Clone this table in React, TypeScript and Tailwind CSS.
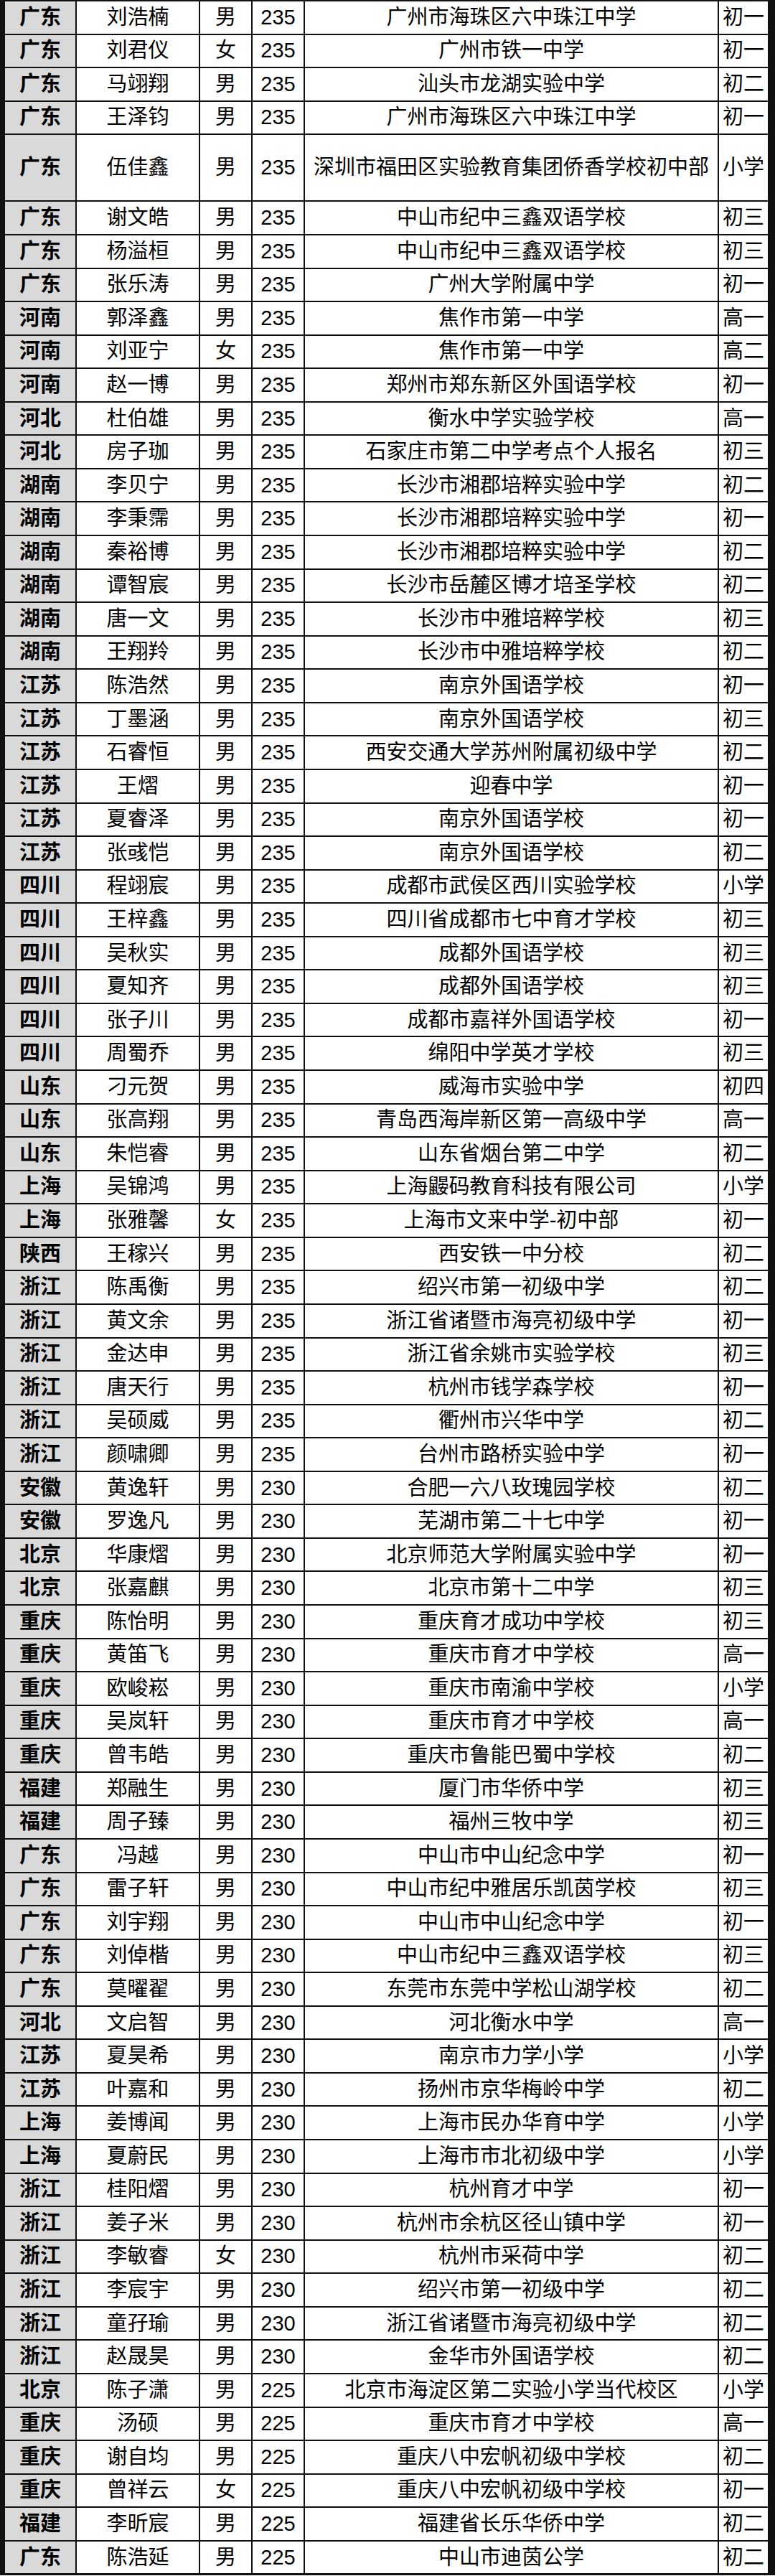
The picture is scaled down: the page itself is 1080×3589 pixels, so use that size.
const rows: [string, string, string, string, string, string][] = [
  ["广东", "刘浩楠", "男", "235", "广州市海珠区六中珠江中学", "初一"],
  ["广东", "刘君仪", "女", "235", "广州市铁一中学", "初一"],
  ["广东", "马翊翔", "男", "235", "汕头市龙湖实验中学", "初二"],
  ["广东", "王泽钧", "男", "235", "广州市海珠区六中珠江中学", "初一"],
  ["广东", "伍佳鑫", "男", "235", "深圳市福田区实验教育集团侨香学校初中部", "小学"],
  ["广东", "谢文皓", "男", "235", "中山市纪中三鑫双语学校", "初三"],
  ["广东", "杨溢桓", "男", "235", "中山市纪中三鑫双语学校", "初三"],
  ["广东", "张乐涛", "男", "235", "广州大学附属中学", "初一"],
  ["河南", "郭泽鑫", "男", "235", "焦作市第一中学", "高一"],
  ["河南", "刘亚宁", "女", "235", "焦作市第一中学", "高二"],
  ["河南", "赵一博", "男", "235", "郑州市郑东新区外国语学校", "初一"],
  ["河北", "杜伯雄", "男", "235", "衡水中学实验学校", "高一"],
  ["河北", "房子珈", "男", "235", "石家庄市第二中学考点个人报名", "初三"],
  ["湖南", "李贝宁", "男", "235", "长沙市湘郡培粹实验中学", "初二"],
  ["湖南", "李秉霈", "男", "235", "长沙市湘郡培粹实验中学", "初一"],
  ["湖南", "秦裕博", "男", "235", "长沙市湘郡培粹实验中学", "初二"],
  ["湖南", "谭智宸", "男", "235", "长沙市岳麓区博才培圣学校", "初二"],
  ["湖南", "唐一文", "男", "235", "长沙市中雅培粹学校", "初三"],
  ["湖南", "王翔羚", "男", "235", "长沙市中雅培粹学校", "初二"],
  ["江苏", "陈浩然", "男", "235", "南京外国语学校", "初一"],
  ["江苏", "丁墨涵", "男", "235", "南京外国语学校", "初三"],
  ["江苏", "石睿恒", "男", "235", "西安交通大学苏州附属初级中学", "初二"],
  ["江苏", "王熠", "男", "235", "迎春中学", "初一"],
  ["江苏", "夏睿泽", "男", "235", "南京外国语学校", "初一"],
  ["江苏", "张彧恺", "男", "235", "南京外国语学校", "初二"],
  ["四川", "程翊宸", "男", "235", "成都市武侯区西川实验学校", "小学"],
  ["四川", "王梓鑫", "男", "235", "四川省成都市七中育才学校", "初三"],
  ["四川", "吴秋实", "男", "235", "成都外国语学校", "初三"],
  ["四川", "夏知齐", "男", "235", "成都外国语学校", "初三"],
  ["四川", "张子川", "男", "235", "成都市嘉祥外国语学校", "初一"],
  ["四川", "周蜀乔", "男", "235", "绵阳中学英才学校", "初三"],
  ["山东", "刁元贺", "男", "235", "威海市实验中学", "初四"],
  ["山东", "张高翔", "男", "235", "青岛西海岸新区第一高级中学", "高一"],
  ["山东", "朱恺睿", "男", "235", "山东省烟台第二中学", "初二"],
  ["上海", "吴锦鸿", "男", "235", "上海鼹码教育科技有限公司", "小学"],
  ["上海", "张雅馨", "女", "235", "上海市文来中学-初中部", "初一"],
  ["陕西", "王稼兴", "男", "235", "西安铁一中分校", "初二"],
  ["浙江", "陈禹衡", "男", "235", "绍兴市第一初级中学", "初二"],
  ["浙江", "黄文余", "男", "235", "浙江省诸暨市海亮初级中学", "初一"],
  ["浙江", "金达申", "男", "235", "浙江省余姚市实验学校", "初三"],
  ["浙江", "唐天行", "男", "235", "杭州市钱学森学校", "初一"],
  ["浙江", "吴硕威", "男", "235", "衢州市兴华中学", "初二"],
  ["浙江", "颜啸卿", "男", "235", "台州市路桥实验中学", "初一"],
  ["安徽", "黄逸轩", "男", "230", "合肥一六八玫瑰园学校", "初二"],
  ["安徽", "罗逸凡", "男", "230", "芜湖市第二十七中学", "初一"],
  ["北京", "华康熠", "男", "230", "北京师范大学附属实验中学", "初一"],
  ["北京", "张嘉麒", "男", "230", "北京市第十二中学", "初三"],
  ["重庆", "陈怡明", "男", "230", "重庆育才成功中学校", "初三"],
  ["重庆", "黄笛飞", "男", "230", "重庆市育才中学校", "高一"],
  ["重庆", "欧峻崧", "男", "230", "重庆市南渝中学校", "小学"],
  ["重庆", "吴岚轩", "男", "230", "重庆市育才中学校", "高一"],
  ["重庆", "曾韦皓", "男", "230", "重庆市鲁能巴蜀中学校", "初二"],
  ["福建", "郑融生", "男", "230", "厦门市华侨中学", "初三"],
  ["福建", "周子臻", "男", "230", "福州三牧中学", "初三"],
  ["广东", "冯越", "男", "230", "中山市中山纪念中学", "初一"],
  ["广东", "雷子轩", "男", "230", "中山市纪中雅居乐凯茵学校", "初三"],
  ["广东", "刘宇翔", "男", "230", "中山市中山纪念中学", "初一"],
  ["广东", "刘倬楷", "男", "230", "中山市纪中三鑫双语学校", "初三"],
  ["广东", "莫曜翟", "男", "230", "东莞市东莞中学松山湖学校", "初二"],
  ["河北", "文启智", "男", "230", "河北衡水中学", "高一"],
  ["江苏", "夏昊希", "男", "230", "南京市力学小学", "小学"],
  ["江苏", "叶嘉和", "男", "230", "扬州市京华梅岭中学", "初二"],
  ["上海", "姜博闻", "男", "230", "上海市民办华育中学", "小学"],
  ["上海", "夏蔚民", "男", "230", "上海市市北初级中学", "小学"],
  ["浙江", "桂阳熠", "男", "230", "杭州育才中学", "初一"],
  ["浙江", "姜子米", "男", "230", "杭州市余杭区径山镇中学", "初一"],
  ["浙江", "李敏睿", "女", "230", "杭州市采荷中学", "初二"],
  ["浙江", "李宸宇", "男", "230", "绍兴市第一初级中学", "初二"],
  ["浙江", "童孖瑜", "男", "230", "浙江省诸暨市海亮初级中学", "初二"],
  ["浙江", "赵晟昊", "男", "230", "金华市外国语学校", "初二"],
  ["北京", "陈子潇", "男", "225", "北京市海淀区第二实验小学当代校区", "小学"],
  ["重庆", "汤硕", "男", "225", "重庆市育才中学校", "高一"],
  ["重庆", "谢自均", "男", "225", "重庆八中宏帆初级中学校", "初二"],
  ["重庆", "曾祥云", "女", "225", "重庆八中宏帆初级中学校", "初一"],
  ["福建", "李昕宸", "男", "225", "福建省长乐华侨中学", "初二"],
  ["广东", "陈浩延", "男", "225", "中山市迪茵公学", "初二"],
];

const cell = "flex items-center justify-center bg-white whitespace-nowrap leading-none";

export default function App() {
  return (
    <div
      className="w-[1080px] bg-[#111] pt-[2px] pb-[3px] pl-[7px] pr-[10px] text-[29px] text-black"
      style={{ fontFamily: '"Liberation Sans", "Noto Sans CJK SC", sans-serif' }}
    >
      <div className="flex flex-col gap-[2px]">
        {rows.map((r, i) => (
          <div
            key={i}
            className={`grid grid-cols-[98px_170px_71px_71px_575px_68px] gap-x-[2px] ${
              i === 4 ? "h-[91.14px]" : "h-[44.57px]"
            }`}
          >
            <div className="flex items-center justify-center bg-[#d9d9d9] font-bold leading-none">{r[0]}</div>
            <div className={cell}>{r[1]}</div>
            <div className={cell}>{r[2]}</div>
            <div className={cell}>{r[3]}</div>
            <div className={cell}>{r[4]}</div>
            <div className={cell}>{r[5]}</div>
          </div>
        ))}
      </div>
    </div>
  );
}
